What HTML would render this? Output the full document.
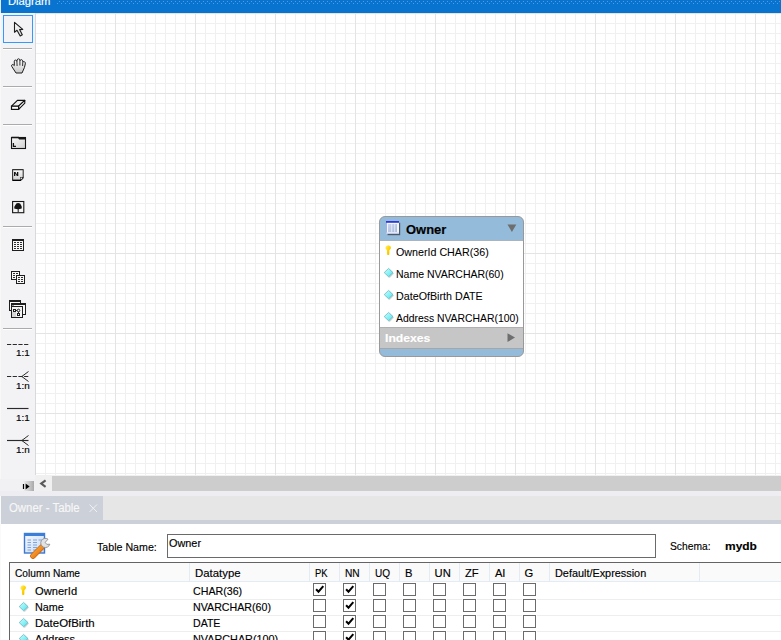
<!DOCTYPE html><html><head><meta charset="utf-8"><style>
*{margin:0;padding:0;box-sizing:border-box}
html,body{width:781px;height:640px;overflow:hidden;background:#F0F0F0;font-family:"Liberation Sans",sans-serif;color:#000}
.a{position:absolute}
.tx{position:absolute;white-space:pre;-webkit-text-stroke:0.15px currentColor}
svg{position:absolute;overflow:visible}
</style></head><body>
<div class="a" style="left:0px;top:0px;width:781px;height:13px;background:#0874CF;"></div>
<div class="a" style="left:0px;top:0px;width:1px;height:13px;background:#E8ECF2;"></div>
<div class="tx" style="left:8.0px;top:-4.39px;font-size:11.8px;line-height:11.8px;color:#FFFFFF;transform:scaleX(0.9509);transform-origin:0 0;">Diagram</div>
<svg style="left:57px;top:0" width="724" height="5"><defs><pattern id="dp" width="8" height="4" patternUnits="userSpaceOnUse">
<rect x="2" y="1" width="1" height="1" fill="#4F9CE0"/><rect x="6" y="1" width="1" height="1" fill="#4F9CE0"/>
<rect x="0" y="3" width="1" height="1" fill="#4F9CE0"/><rect x="4" y="3" width="1" height="1" fill="#4F9CE0"/>
</pattern></defs><rect width="724" height="5" fill="url(#dp)"/></svg>
<div class="a" style="left:0px;top:13px;width:35px;height:479px;background:#F3F3F5;"></div>
<div class="a" style="left:0px;top:13px;width:1px;height:479px;background:#F8F8F9;"></div>
<div class="a" style="left:35px;top:13px;width:1px;height:462px;background:#D9D9D9;"></div>
<div class="a" style="left:3px;top:15px;width:30px;height:28px;background:#F3F3F6;border:1px solid #3399FF"></div>
<div class="a" style="left:3px;top:48px;width:29px;height:1px;background:#ABABAB;"></div>
<div class="a" style="left:3px;top:49px;width:29px;height:1px;background:#FFFFFF;"></div>
<div class="a" style="left:3px;top:86px;width:29px;height:1px;background:#ABABAB;"></div>
<div class="a" style="left:3px;top:87px;width:29px;height:1px;background:#FFFFFF;"></div>
<div class="a" style="left:3px;top:124px;width:29px;height:1px;background:#ABABAB;"></div>
<div class="a" style="left:3px;top:125px;width:29px;height:1px;background:#FFFFFF;"></div>
<div class="a" style="left:3px;top:226px;width:29px;height:1px;background:#ABABAB;"></div>
<div class="a" style="left:3px;top:227px;width:29px;height:1px;background:#FFFFFF;"></div>
<div class="a" style="left:3px;top:328px;width:29px;height:1px;background:#ABABAB;"></div>
<div class="a" style="left:3px;top:329px;width:29px;height:1px;background:#FFFFFF;"></div>
<svg style="left:0;top:0" width="36" height="60"><defs><linearGradient id="ag" x1="0" y1="0" x2="1" y2="1"><stop offset="0" stop-color="#fff"/><stop offset="1" stop-color="#D0D0D0"/></linearGradient></defs><path d="M14.5 22.3 L14.5 32.3 L17 30.3 L20.2 36 L22.3 34.8 L19.6 29.6 L22.8 29.4 Z" fill="url(#ag)" stroke="#1E1E1E" stroke-width="1.1" stroke-linejoin="round"/></svg>
<svg style="left:0;top:40px" width="36" height="40"><defs><linearGradient id="hg" x1="0" y1="0" x2="0" y2="1"><stop offset="0" stop-color="#fff"/><stop offset="1" stop-color="#C8C8C8"/></linearGradient></defs><path d="M16 33 L11.8 26.5 Q11 25 12.2 24.6 Q13.2 24.3 14.3 25.6 L14.3 21.2 Q14.4 20 15.6 20.1 Q16.7 20.2 16.9 21.5 L17.1 20 Q17.4 18.8 18.6 18.8 Q19.8 18.9 19.9 20.2 L20.1 20.6 Q20.4 19.5 21.6 19.7 Q22.8 20 22.8 21.5 L23 22 Q23.6 21.3 24.6 21.8 Q25.6 22.4 25.3 23.9 L24.4 27.6 L22 33 Z" fill="url(#hg)" stroke="#1E1E1E" stroke-width="1" stroke-linejoin="round"/><path d="M16.9 21.5 L17.1 26 M19.9 20.2 L19.9 25.5 M22.8 21.5 L22.6 26" stroke="#1E1E1E" stroke-width="0.9" fill="none"/></svg>
<svg style="left:0;top:90px" width="36" height="30"><path d="M11.5 16.2 L17.4 10.4 L24.8 10.4 L18.6 16.2 Z" fill="#EDEDED" stroke="#111" stroke-width="1.1" stroke-linejoin="round"/><path d="M18.6 16.2 L24.8 10.4 L24.8 13.2 L18.6 19.4 Z" fill="#fff" stroke="#111" stroke-width="1.1" stroke-linejoin="round"/><rect x="11.5" y="16.2" width="7.1" height="3.2" fill="#fff" stroke="#111" stroke-width="1.2"/></svg>
<svg style="left:0;top:130px" width="36" height="30"><defs><linearGradient id="lg" x1="0" y1="0" x2="1" y2="1"><stop offset="0" stop-color="#FAFAFA"/><stop offset="1" stop-color="#CFCFCF"/></linearGradient></defs><rect x="11.5" y="7.5" width="14" height="11" fill="url(#lg)" stroke="#151515" stroke-width="1.1"/><path d="M11.5 7.6 L18.5 7.6 L19.5 8.8 L25.5 8.8" fill="none" stroke="#151515" stroke-width="1.5"/><path d="M13.4 13 L13.4 16.3 L16 16.3" fill="none" stroke="#151515" stroke-width="1.3"/></svg>
<svg style="left:0;top:160px" width="36" height="30"><defs><linearGradient id="ng" x1="0" y1="0" x2="0" y2="1"><stop offset="0" stop-color="#FAFAFA"/><stop offset="1" stop-color="#D0D0D0"/></linearGradient></defs><path d="M12.6 9.6 L23.2 9.6 L23.2 17.5 L20.4 20.3 L12.6 20.3 Z" fill="url(#ng)" stroke="#333" stroke-width="1.1" stroke-linejoin="round"/><path d="M12.6 20.3 L20.4 20.3 L23.2 17.5" fill="none" stroke="#000" stroke-width="1.2"/><rect x="20.6" y="17.6" width="1.6" height="1.6" fill="#fff" stroke="#333" stroke-width="0.6"/><path d="M14 12 H15.4 L17 14.4 V12 H18.3 V16 H16.9 L15.3 13.6 V16 H14 Z" fill="#151515"/></svg>
<svg style="left:0;top:195px" width="36" height="25"><rect x="12.6" y="6.5" width="11.2" height="11.2" fill="#F4F4F4" stroke="#151515" stroke-width="1.1"/><path d="M14.2 13.6 Q14 11 15.4 10 Q15.9 8 18 8 Q20.6 7.9 21 10 Q22.2 11.5 21.7 13.6 Q18 14.8 14.2 13.6 Z" fill="#151515"/><path d="M18.2 13 L18.2 17.2" stroke="#151515" stroke-width="1"/></svg>
<svg style="left:0;top:0" width="36" height="330" shape-rendering="crispEdges"><rect x="12" y="239" width="12" height="12" fill="#1E1E1E"/><rect x="13" y="241" width="10" height="9" fill="#F7F7F7"/><rect x="14" y="242" width="2" height="1" fill="#303030"/><rect x="14" y="244" width="2" height="1" fill="#303030"/><rect x="14" y="246" width="2" height="1" fill="#303030"/><rect x="14" y="248" width="2" height="1" fill="#303030"/><rect x="17" y="242" width="2" height="1" fill="#303030"/><rect x="17" y="244" width="2" height="1" fill="#303030"/><rect x="17" y="246" width="2" height="1" fill="#303030"/><rect x="17" y="248" width="2" height="1" fill="#303030"/><rect x="20" y="242" width="2" height="1" fill="#303030"/><rect x="20" y="244" width="2" height="1" fill="#303030"/><rect x="20" y="246" width="2" height="1" fill="#303030"/><rect x="20" y="248" width="2" height="1" fill="#303030"/></svg>
<svg style="left:0;top:0" width="36" height="330" shape-rendering="crispEdges"><rect x="11" y="271" width="9" height="9" fill="#1E1E1E"/><rect x="12" y="272" width="7" height="7" fill="#F7F7F7"/><rect x="13" y="273" width="2" height="1" fill="#303030"/><rect x="13" y="275" width="2" height="1" fill="#303030"/><rect x="13" y="277" width="2" height="1" fill="#303030"/><rect x="16" y="273" width="2" height="1" fill="#303030"/><rect x="16" y="275" width="2" height="1" fill="#303030"/><rect x="16" y="277" width="2" height="1" fill="#303030"/><rect x="16" y="275" width="9" height="9" fill="#1E1E1E"/><rect x="17" y="276" width="7" height="7" fill="#F7F7F7"/><rect x="18" y="277" width="2" height="1" fill="#303030"/><rect x="18" y="279" width="2" height="1" fill="#303030"/><rect x="18" y="281" width="2" height="1" fill="#303030"/><rect x="21" y="277" width="2" height="1" fill="#303030"/><rect x="21" y="279" width="2" height="1" fill="#303030"/><rect x="21" y="281" width="2" height="1" fill="#303030"/></svg>
<svg style="left:0;top:0" width="36" height="330" shape-rendering="crispEdges"><rect x="9" y="300" width="12" height="11" fill="#1E1E1E"/><rect x="10" y="302" width="10" height="8" fill="#F8F8F8"/><rect x="11" y="303" width="15" height="12" fill="#1E1E1E"/><rect x="12" y="305" width="13" height="9" fill="#FAFAFA"/><rect x="12" y="305" width="2" height="2" fill="#9A9A9A"/><rect x="11" y="306" width="12" height="12" fill="#1E1E1E"/><rect x="12" y="307" width="10" height="10" fill="#F4F4F4"/><rect x="12" y="312" width="4" height="5" fill="#D6D6D6"/></svg>
<svg style="left:0;top:0" width="36" height="330"><rect x="13.5" y="309.5" width="2" height="2" fill="#fff" stroke="#1E1E1E" stroke-width="1"/><circle cx="18.5" cy="310.5" r="1.3" fill="#fff" stroke="#1E1E1E" stroke-width="1"/><rect x="17.5" y="313.5" width="2" height="2" fill="#fff" stroke="#1E1E1E" stroke-width="1"/><path d="M15.5 310.5 H17.2 M18.5 311.8 V313.5" stroke="#1E1E1E" stroke-width="0.9"/></svg>
<svg style="left:0;top:0" width="36" height="470"><path d="M7 344.5 H28.5" stroke="#2A2A2A" stroke-width="1.15" stroke-dasharray="4.2,1.5"/></svg>
<div class="tx" style="left:16.4px;top:349.43px;font-size:9.3px;line-height:9.3px;color:#000;-webkit-text-stroke:0.15px #000;transform:scaleX(1.0597);transform-origin:0 0;">1:1</div>
<svg style="left:0;top:0" width="36" height="470"><path d="M7 376.5 H28.5" stroke="#2A2A2A" stroke-width="1.15" stroke-dasharray="4.2,1.5"/><path d="M21.8 376.5 L28.5 371.5 M21.8 376.5 L28.5 381.5" stroke="#2A2A2A" stroke-width="1" fill="none"/></svg>
<div class="tx" style="left:16.4px;top:381.53px;font-size:9.3px;line-height:9.3px;color:#000;-webkit-text-stroke:0.15px #000;transform:scaleX(1.0597);transform-origin:0 0;">1:n</div>
<svg style="left:0;top:0" width="36" height="470"><path d="M7 408.5 H28.5" stroke="#2A2A2A" stroke-width="1.15"/></svg>
<div class="tx" style="left:16.4px;top:413.73px;font-size:9.3px;line-height:9.3px;color:#000;-webkit-text-stroke:0.15px #000;transform:scaleX(1.0597);transform-origin:0 0;">1:1</div>
<svg style="left:0;top:0" width="36" height="470"><path d="M7 440.5 H28.5" stroke="#2A2A2A" stroke-width="1.15"/><path d="M21.8 440.5 L28.5 435.5 M21.8 440.5 L28.5 445.5" stroke="#2A2A2A" stroke-width="1" fill="none"/></svg>
<div class="tx" style="left:16.4px;top:445.53px;font-size:9.3px;line-height:9.3px;color:#000;-webkit-text-stroke:0.15px #000;transform:scaleX(1.0597);transform-origin:0 0;">1:n</div>
<div class="a" style="left:0px;top:479px;width:35px;height:13px;background:#F1F1F3;"></div>
<div class="a" style="left:23px;top:481px;width:11px;height:11px;background:linear-gradient(to right,#F2F2F2,#A9A9A9)"></div>
<svg style="left:0;top:475px" width="36" height="20"><path d="M23.5 9 V14" stroke="#fff" stroke-width="2.6"/><path d="M23.5 9 V14" stroke="#000" stroke-width="1.3"/><path d="M25.6 8.6 L29.6 11.5 L25.6 14.4 Z" fill="#000"/></svg>
<div class="a" style="left:36px;top:13px;width:745px;height:462px;background-color:#fff;
background-image:linear-gradient(to right,#E4E4E4 1px,transparent 1px),linear-gradient(to bottom,#E4E4E4 1px,transparent 1px),linear-gradient(to right,#F0F0F0 1px,transparent 1px),linear-gradient(to bottom,#F0F0F0 1px,transparent 1px);
background-size:80px 80px,80px 80px,10px 10px,10px 10px;background-position:-1px 0,0 0,9px 0,0 0"></div>
<div class="a" style="left:379px;top:216px;width:145px;height:141px;border:1px solid #999999;border-radius:6px;overflow:hidden;background:#94BBD9"><div class="a" style="left:0;top:23px;width:143px;height:1px;background:#A9B4BE"></div><div class="a" style="left:0;top:24px;width:143px;height:86px;background:#fff"></div><div class="a" style="left:0;top:110px;width:143px;height:1px;background:#B0B0B0"></div><div class="a" style="left:0;top:111px;width:143px;height:20px;background:#C6C6C6"></div><div class="a" style="left:0;top:131px;width:143px;height:1px;background:#A6A6A6"></div></div>
<svg style="left:386px;top:221px" width="16" height="16"><defs><linearGradient id="eg" x1="0" y1="0" x2="1" y2="1"><stop offset="0" stop-color="#CBD6EC"/><stop offset="1" stop-color="#A7BADF"/></linearGradient></defs><rect x="1.6" y="1.8" width="12.6" height="12.4" fill="#3A4250" opacity="0.8"/><rect x="0" y="0" width="13" height="12.6" fill="#F2F6FD"/><rect x="0" y="1.5" width="0.9" height="11" fill="#9AA8E6"/><rect x="0" y="11.6" width="13" height="1" fill="#C8D2F0"/><rect x="0" y="0" width="13" height="1.8" fill="#2E38D8"/><rect x="2" y="3" width="9" height="8" fill="url(#eg)"/><rect x="5.3" y="3" width="0.9" height="8" fill="#E8EEF8"/><rect x="8.3" y="3" width="0.9" height="8" fill="#E8EEF8"/></svg>
<div class="tx" style="left:406.2px;top:223.92px;font-size:12.5px;line-height:12.5px;font-weight:bold;color:#000;transform:scaleX(1.0361);transform-origin:0 0;">Owner</div>
<svg style="left:507px;top:224px" width="10" height="9"><path d="M0.5 0.5 L9.3 0.5 L4.9 8 Z" fill="#6E6E6E"/></svg>
<svg style="left:384.6px;top:244.8px" width="8" height="11"><defs><linearGradient id="kg1" x1="0" y1="0" x2="1" y2="1"><stop offset="0" stop-color="#FFF080"/><stop offset="0.5" stop-color="#FFD400"/><stop offset="1" stop-color="#E8B400"/></linearGradient></defs><path d="M1.9 5 Q0.2 4.2 0.4 2.6 Q0.8 0.3 3.2 0.2 Q5.8 0.3 6 2.6 Q6 4.2 4.4 5 L4.3 9.6 Q3.2 10.6 2.1 9.6 Z" fill="url(#kg1)"/></svg>
<div class="tx" style="left:396px;top:247.17px;font-size:10.9px;line-height:10.9px;color:#000;-webkit-text-stroke:0.05px #000;transform:scaleX(0.9821);transform-origin:0 0;">OwnerId CHAR(36)</div>
<svg style="left:384px;top:267.6px" width="11" height="11"><defs><linearGradient id="dg2" x1="0" y1="0" x2="1" y2="1"><stop offset="0" stop-color="#D0FFFF"/><stop offset="1" stop-color="#48E4EE"/></linearGradient></defs><path d="M5.7 1.2 L10 5.6 L5.7 10 L1.4 5.6 Z" fill="#9AA" opacity="0.5"/><path d="M4.6 0.4 L9 4.6 L4.6 8.8 L0.2 4.6 Z" fill="url(#dg2)" stroke="#5FAFB8" stroke-width="0.7"/></svg>
<div class="tx" style="left:396px;top:269.17px;font-size:10.9px;line-height:10.9px;color:#000;-webkit-text-stroke:0.05px #000;transform:scaleX(0.9638);transform-origin:0 0;">Name NVARCHAR(60)</div>
<svg style="left:384px;top:289.6px" width="11" height="11"><defs><linearGradient id="dg3" x1="0" y1="0" x2="1" y2="1"><stop offset="0" stop-color="#D0FFFF"/><stop offset="1" stop-color="#48E4EE"/></linearGradient></defs><path d="M5.7 1.2 L10 5.6 L5.7 10 L1.4 5.6 Z" fill="#9AA" opacity="0.5"/><path d="M4.6 0.4 L9 4.6 L4.6 8.8 L0.2 4.6 Z" fill="url(#dg3)" stroke="#5FAFB8" stroke-width="0.7"/></svg>
<div class="tx" style="left:396px;top:291.17px;font-size:10.9px;line-height:10.9px;color:#000;-webkit-text-stroke:0.05px #000;transform:scaleX(0.9838);transform-origin:0 0;">DateOfBirth DATE</div>
<svg style="left:384px;top:311.6px" width="11" height="11"><defs><linearGradient id="dg4" x1="0" y1="0" x2="1" y2="1"><stop offset="0" stop-color="#D0FFFF"/><stop offset="1" stop-color="#48E4EE"/></linearGradient></defs><path d="M5.7 1.2 L10 5.6 L5.7 10 L1.4 5.6 Z" fill="#9AA" opacity="0.5"/><path d="M4.6 0.4 L9 4.6 L4.6 8.8 L0.2 4.6 Z" fill="url(#dg4)" stroke="#5FAFB8" stroke-width="0.7"/></svg>
<div class="tx" style="left:396px;top:313.17px;font-size:10.9px;line-height:10.9px;color:#000;-webkit-text-stroke:0.05px #000;transform:scaleX(0.9533);transform-origin:0 0;">Address NVARCHAR(100)</div>
<div class="tx" style="left:385.3px;top:332.83px;font-size:11.3px;line-height:11.3px;font-weight:bold;color:#FFFFFF;transform:scaleX(1.0764);transform-origin:0 0;">Indexes</div>
<svg style="left:507px;top:333px" width="9" height="10"><path d="M0.5 0.3 L8 4.6 L0.5 9 Z" fill="#6E6E6E"/></svg>
<div class="a" style="left:36px;top:475px;width:745px;height:16px;background:#F0F0F0;"></div>
<div class="a" style="left:52px;top:476px;width:729px;height:15px;background:#CDCDCD;"></div>
<svg style="left:40px;top:480px" width="8" height="9"><path d="M5.6 0.4 L1.2 3.6 L5.6 6.8" fill="none" stroke="#5A5A5A" stroke-width="2.1"/></svg>
<div class="a" style="left:0px;top:491px;width:781px;height:5px;background:#EEEEF2;"></div>
<div class="a" style="left:0px;top:496px;width:781px;height:24px;background:#E6E6E6;"></div>
<div class="a" style="left:0px;top:520px;width:781px;height:4px;background:#CCD0D9;"></div>
<div class="a" style="left:1px;top:496px;width:102px;height:28px;background:#CCD0D9;"></div>
<div class="tx" style="left:8.7px;top:502.44px;font-size:12.0px;line-height:12.0px;color:#F7F7F7;transform:scaleX(0.9493);transform-origin:0 0;">Owner - Table</div>
<svg style="left:88.5px;top:504px" width="9" height="9"><path d="M0.5 0.5 L8 8 M8 0.5 L0.5 8" stroke="#EEF0F4" stroke-width="1"/></svg>
<div class="a" style="left:0px;top:524px;width:781px;height:116px;background:#FFFFFF;"></div>
<div class="a" style="left:0px;top:496px;width:1px;height:144px;background:#FAFAFA;"></div>
<svg style="left:23px;top:532px" width="30" height="30"><defs><linearGradient id="tg" x1="0" y1="0" x2="1" y2="1"><stop offset="0" stop-color="#F4F8FF"/><stop offset="1" stop-color="#C8DAF4"/></linearGradient><linearGradient id="wg" x1="0" y1="0" x2="1" y2="1"><stop offset="0" stop-color="#FFB14A"/><stop offset="1" stop-color="#E06A00"/></linearGradient></defs><rect x="1.5" y="1.5" width="20" height="19.5" fill="url(#tg)" stroke="#3C78CF" stroke-width="1.4"/><rect x="1" y="1" width="21" height="3" fill="#3C7FD8"/><path d="M4.5 8 H8 M10 8 H14 M15.5 8 H19 M4.5 10.5 H8 M10 10.5 H14 M4.5 13 H8 M10 13 H14 M4.5 15.5 H8 M10 15.5 H14 M4.5 18 H8 M10 18 H14" stroke="#7FA5DB" stroke-width="1"/><path d="M10 24 L19.2 14.8" stroke="#C85A00" stroke-width="5.6" stroke-linecap="round"/><path d="M10 24 L19.2 14.8" stroke="url(#wg)" stroke-width="4.4" stroke-linecap="round"/><path d="M25 7.2 A4.6 4.6 0 1 0 26.8 12.2 L23.8 12.4 L22.2 10.4 Z" fill="#E2E2E2" stroke="#8E8E8E" stroke-width="0.9"/></svg>
<div class="tx" style="left:96.8px;top:540.98px;font-size:11.6px;line-height:11.6px;color:#000;transform:scaleX(0.9183);transform-origin:0 0;">Table Name:</div>
<div class="a" style="left:167px;top:534px;width:489px;height:24px;background:#fff;border:1px solid #6A6A6A"></div>
<div class="tx" style="left:168.8px;top:538.29px;font-size:11px;line-height:11px;color:#000;transform:scaleX(0.9877);transform-origin:0 0;">Owner</div>
<div class="tx" style="left:669.8px;top:541.00px;font-size:11.1px;line-height:11.1px;color:#000;transform:scaleX(0.9246);transform-origin:0 0;">Schema:</div>
<div class="tx" style="left:724.8px;top:540.85px;font-size:11.4px;line-height:11.4px;font-weight:bold;color:#000;transform:scaleX(1.0492);transform-origin:0 0;">mydb</div>
<div class="a" style="left:9px;top:562px;width:772px;height:78px;background:#fff;border-left:1px solid #646464;border-top:1px solid #646464"></div>
<div class="a" style="left:10px;top:563px;width:771px;height:18px;background:#FAFAFA;"></div>
<div class="a" style="left:10px;top:581px;width:771px;height:1px;background:#E3EBF5;"></div>
<div class="a" style="left:189px;top:563px;width:1px;height:18px;background:#E3EBF5;"></div>
<div class="a" style="left:309px;top:563px;width:1px;height:18px;background:#E3EBF5;"></div>
<div class="a" style="left:339px;top:563px;width:1px;height:18px;background:#E3EBF5;"></div>
<div class="a" style="left:369px;top:563px;width:1px;height:18px;background:#E3EBF5;"></div>
<div class="a" style="left:399px;top:563px;width:1px;height:18px;background:#E3EBF5;"></div>
<div class="a" style="left:429px;top:563px;width:1px;height:18px;background:#E3EBF5;"></div>
<div class="a" style="left:459px;top:563px;width:1px;height:18px;background:#E3EBF5;"></div>
<div class="a" style="left:489px;top:563px;width:1px;height:18px;background:#E3EBF5;"></div>
<div class="a" style="left:519px;top:563px;width:1px;height:18px;background:#E3EBF5;"></div>
<div class="a" style="left:549px;top:563px;width:1px;height:18px;background:#E3EBF5;"></div>
<div class="a" style="left:699px;top:563px;width:1px;height:18px;background:#E3EBF5;"></div>
<div class="tx" style="left:14.7px;top:568.12px;font-size:11.2px;line-height:11.2px;color:#000;transform:scaleX(0.9095);transform-origin:0 0;">Column Name</div>
<div class="tx" style="left:194.8px;top:568.12px;font-size:11.2px;line-height:11.2px;color:#000;transform:scaleX(1.0172);transform-origin:0 0;">Datatype</div>
<div class="tx" style="left:314.6px;top:568.12px;font-size:11.2px;line-height:11.2px;color:#000;transform:scaleX(0.8433);transform-origin:0 0;">PK</div>
<div class="tx" style="left:344.5px;top:568.12px;font-size:11.2px;line-height:11.2px;color:#000;transform:scaleX(0.9087);transform-origin:0 0;">NN</div>
<div class="tx" style="left:374.8px;top:568.12px;font-size:11.2px;line-height:11.2px;color:#000;transform:scaleX(0.8988);transform-origin:0 0;">UQ</div>
<div class="tx" style="left:404.9px;top:568.12px;font-size:11.2px;line-height:11.2px;color:#000;">B</div>
<div class="tx" style="left:434.6px;top:568.12px;font-size:11.2px;line-height:11.2px;color:#000;">UN</div>
<div class="tx" style="left:464.9px;top:568.12px;font-size:11.2px;line-height:11.2px;color:#000;">ZF</div>
<div class="tx" style="left:494.9px;top:568.12px;font-size:11.2px;line-height:11.2px;color:#000;">AI</div>
<div class="tx" style="left:524.5px;top:568.12px;font-size:11.2px;line-height:11.2px;color:#000;">G</div>
<div class="tx" style="left:554.5px;top:568.12px;font-size:11.2px;line-height:11.2px;color:#000;transform:scaleX(0.9712);transform-origin:0 0;">Default/Expression</div>
<div class="a" style="left:10px;top:599px;width:771px;height:1px;background:#EEEEEE;"></div>
<div class="a" style="left:10px;top:615px;width:771px;height:1px;background:#EEEEEE;"></div>
<div class="a" style="left:10px;top:631px;width:771px;height:1px;background:#EEEEEE;"></div>
<svg style="left:20px;top:584.8px" width="8" height="11"><defs><linearGradient id="kg5" x1="0" y1="0" x2="1" y2="1"><stop offset="0" stop-color="#FFF080"/><stop offset="0.5" stop-color="#FFD400"/><stop offset="1" stop-color="#E8B400"/></linearGradient></defs><path d="M1.9 5 Q0.2 4.2 0.4 2.6 Q0.8 0.3 3.2 0.2 Q5.8 0.3 6 2.6 Q6 4.2 4.4 5 L4.3 9.6 Q3.2 10.6 2.1 9.6 Z" fill="url(#kg5)"/></svg>
<div class="tx" style="left:34.6px;top:586.09px;font-size:11px;line-height:11px;color:#000;transform:scaleX(1.0127);transform-origin:0 0;">OwnerId</div>
<div class="tx" style="left:192.5px;top:586.09px;font-size:11px;line-height:11px;color:#000;transform:scaleX(0.9679);transform-origin:0 0;">CHAR(36)</div>
<div class="a" style="left:313px;top:583px;width:13px;height:13px;border:1px solid #6B6B6B;background:#fff;box-shadow:0 0 0 1px #fff"></div>
<svg style="left:313px;top:583px" width="13" height="13"><path d="M3.1 6.2 L5.5 8.7 L10.3 3.1" fill="none" stroke="#000" stroke-width="2"/></svg>
<div class="a" style="left:343px;top:583px;width:13px;height:13px;border:1px solid #6B6B6B;background:#fff;box-shadow:0 0 0 1px #fff"></div>
<svg style="left:343px;top:583px" width="13" height="13"><path d="M3.1 6.2 L5.5 8.7 L10.3 3.1" fill="none" stroke="#000" stroke-width="2"/></svg>
<div class="a" style="left:373px;top:583px;width:13px;height:13px;border:1px solid #6B6B6B;background:#fff;box-shadow:0 0 0 1px #fff"></div>
<div class="a" style="left:403px;top:583px;width:13px;height:13px;border:1px solid #6B6B6B;background:#fff;box-shadow:0 0 0 1px #fff"></div>
<div class="a" style="left:433px;top:583px;width:13px;height:13px;border:1px solid #6B6B6B;background:#fff;box-shadow:0 0 0 1px #fff"></div>
<div class="a" style="left:463px;top:583px;width:13px;height:13px;border:1px solid #6B6B6B;background:#fff;box-shadow:0 0 0 1px #fff"></div>
<div class="a" style="left:493px;top:583px;width:13px;height:13px;border:1px solid #6B6B6B;background:#fff;box-shadow:0 0 0 1px #fff"></div>
<div class="a" style="left:523px;top:583px;width:13px;height:13px;border:1px solid #6B6B6B;background:#fff;box-shadow:0 0 0 1px #fff"></div>
<svg style="left:19px;top:601.8px" width="11" height="11"><defs><linearGradient id="dg6" x1="0" y1="0" x2="1" y2="1"><stop offset="0" stop-color="#D0FFFF"/><stop offset="1" stop-color="#48E4EE"/></linearGradient></defs><path d="M5.7 1.2 L10 5.6 L5.7 10 L1.4 5.6 Z" fill="#9AA" opacity="0.5"/><path d="M4.6 0.4 L9 4.6 L4.6 8.8 L0.2 4.6 Z" fill="url(#dg6)" stroke="#5FAFB8" stroke-width="0.7"/></svg>
<div class="tx" style="left:34.6px;top:601.89px;font-size:11px;line-height:11px;color:#000;transform:scaleX(0.9815);transform-origin:0 0;">Name</div>
<div class="tx" style="left:192.5px;top:601.89px;font-size:11px;line-height:11px;color:#000;transform:scaleX(0.9692);transform-origin:0 0;">NVARCHAR(60)</div>
<div class="a" style="left:313px;top:599px;width:13px;height:13px;border:1px solid #6B6B6B;background:#fff;box-shadow:0 0 0 1px #fff"></div>
<div class="a" style="left:343px;top:599px;width:13px;height:13px;border:1px solid #6B6B6B;background:#fff;box-shadow:0 0 0 1px #fff"></div>
<svg style="left:343px;top:599px" width="13" height="13"><path d="M3.1 6.2 L5.5 8.7 L10.3 3.1" fill="none" stroke="#000" stroke-width="2"/></svg>
<div class="a" style="left:373px;top:599px;width:13px;height:13px;border:1px solid #6B6B6B;background:#fff;box-shadow:0 0 0 1px #fff"></div>
<div class="a" style="left:403px;top:599px;width:13px;height:13px;border:1px solid #6B6B6B;background:#fff;box-shadow:0 0 0 1px #fff"></div>
<div class="a" style="left:433px;top:599px;width:13px;height:13px;border:1px solid #6B6B6B;background:#fff;box-shadow:0 0 0 1px #fff"></div>
<div class="a" style="left:463px;top:599px;width:13px;height:13px;border:1px solid #6B6B6B;background:#fff;box-shadow:0 0 0 1px #fff"></div>
<div class="a" style="left:493px;top:599px;width:13px;height:13px;border:1px solid #6B6B6B;background:#fff;box-shadow:0 0 0 1px #fff"></div>
<div class="a" style="left:523px;top:599px;width:13px;height:13px;border:1px solid #6B6B6B;background:#fff;box-shadow:0 0 0 1px #fff"></div>
<svg style="left:19px;top:617.8px" width="11" height="11"><defs><linearGradient id="dg7" x1="0" y1="0" x2="1" y2="1"><stop offset="0" stop-color="#D0FFFF"/><stop offset="1" stop-color="#48E4EE"/></linearGradient></defs><path d="M5.7 1.2 L10 5.6 L5.7 10 L1.4 5.6 Z" fill="#9AA" opacity="0.5"/><path d="M4.6 0.4 L9 4.6 L4.6 8.8 L0.2 4.6 Z" fill="url(#dg7)" stroke="#5FAFB8" stroke-width="0.7"/></svg>
<div class="tx" style="left:34.6px;top:617.99px;font-size:11px;line-height:11px;color:#000;transform:scaleX(1.0389);transform-origin:0 0;">DateOfBirth</div>
<div class="tx" style="left:192.5px;top:617.99px;font-size:11px;line-height:11px;color:#000;transform:scaleX(0.9607);transform-origin:0 0;">DATE</div>
<div class="a" style="left:313px;top:615px;width:13px;height:13px;border:1px solid #6B6B6B;background:#fff;box-shadow:0 0 0 1px #fff"></div>
<div class="a" style="left:343px;top:615px;width:13px;height:13px;border:1px solid #6B6B6B;background:#fff;box-shadow:0 0 0 1px #fff"></div>
<svg style="left:343px;top:615px" width="13" height="13"><path d="M3.1 6.2 L5.5 8.7 L10.3 3.1" fill="none" stroke="#000" stroke-width="2"/></svg>
<div class="a" style="left:373px;top:615px;width:13px;height:13px;border:1px solid #6B6B6B;background:#fff;box-shadow:0 0 0 1px #fff"></div>
<div class="a" style="left:403px;top:615px;width:13px;height:13px;border:1px solid #6B6B6B;background:#fff;box-shadow:0 0 0 1px #fff"></div>
<div class="a" style="left:433px;top:615px;width:13px;height:13px;border:1px solid #6B6B6B;background:#fff;box-shadow:0 0 0 1px #fff"></div>
<div class="a" style="left:463px;top:615px;width:13px;height:13px;border:1px solid #6B6B6B;background:#fff;box-shadow:0 0 0 1px #fff"></div>
<div class="a" style="left:493px;top:615px;width:13px;height:13px;border:1px solid #6B6B6B;background:#fff;box-shadow:0 0 0 1px #fff"></div>
<div class="a" style="left:523px;top:615px;width:13px;height:13px;border:1px solid #6B6B6B;background:#fff;box-shadow:0 0 0 1px #fff"></div>
<svg style="left:19px;top:633.8px" width="11" height="11"><defs><linearGradient id="dg8" x1="0" y1="0" x2="1" y2="1"><stop offset="0" stop-color="#D0FFFF"/><stop offset="1" stop-color="#48E4EE"/></linearGradient></defs><path d="M5.7 1.2 L10 5.6 L5.7 10 L1.4 5.6 Z" fill="#9AA" opacity="0.5"/><path d="M4.6 0.4 L9 4.6 L4.6 8.8 L0.2 4.6 Z" fill="url(#dg8)" stroke="#5FAFB8" stroke-width="0.7"/></svg>
<div class="tx" style="left:34.6px;top:633.99px;font-size:11px;line-height:11px;color:#000;transform:scaleX(0.9912);transform-origin:0 0;">Address</div>
<div class="tx" style="left:192.5px;top:633.99px;font-size:11px;line-height:11px;color:#000;transform:scaleX(0.9839);transform-origin:0 0;">NVARCHAR(100)</div>
<div class="a" style="left:313px;top:631px;width:13px;height:13px;border:1px solid #6B6B6B;background:#fff;box-shadow:0 0 0 1px #fff"></div>
<div class="a" style="left:343px;top:631px;width:13px;height:13px;border:1px solid #6B6B6B;background:#fff;box-shadow:0 0 0 1px #fff"></div>
<svg style="left:343px;top:631px" width="13" height="13"><path d="M3.1 6.2 L5.5 8.7 L10.3 3.1" fill="none" stroke="#000" stroke-width="2"/></svg>
<div class="a" style="left:373px;top:631px;width:13px;height:13px;border:1px solid #6B6B6B;background:#fff;box-shadow:0 0 0 1px #fff"></div>
<div class="a" style="left:403px;top:631px;width:13px;height:13px;border:1px solid #6B6B6B;background:#fff;box-shadow:0 0 0 1px #fff"></div>
<div class="a" style="left:433px;top:631px;width:13px;height:13px;border:1px solid #6B6B6B;background:#fff;box-shadow:0 0 0 1px #fff"></div>
<div class="a" style="left:463px;top:631px;width:13px;height:13px;border:1px solid #6B6B6B;background:#fff;box-shadow:0 0 0 1px #fff"></div>
<div class="a" style="left:493px;top:631px;width:13px;height:13px;border:1px solid #6B6B6B;background:#fff;box-shadow:0 0 0 1px #fff"></div>
<div class="a" style="left:523px;top:631px;width:13px;height:13px;border:1px solid #6B6B6B;background:#fff;box-shadow:0 0 0 1px #fff"></div>
</body></html>
